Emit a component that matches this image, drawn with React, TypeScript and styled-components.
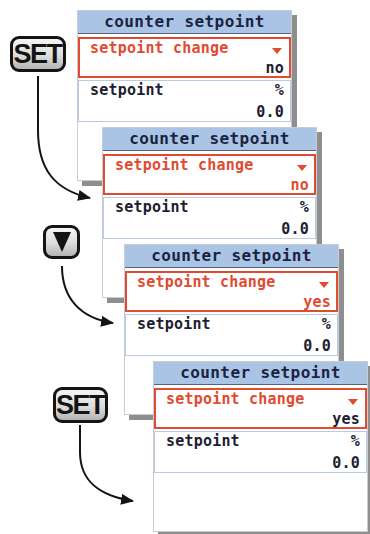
import React, { FC } from 'react';
import styled, { createGlobalStyle } from 'styled-components';

const colors = {
  header: '#a9c4e5',
  headerLine: '#56617a',
  headerText: '#1b2340',
  red: '#e04b31',
  ink: '#1d2030',
  rowBorder: '#b9cbe2',
  frame: '#c9ccd2',
  shadow: '#8e8e8e',
  key: '#141414',
};

const GlobalStyle = createGlobalStyle`
  html, body {
    margin: 0;
    padding: 0;
    background: #fff;
  }
`;

const Stage = styled.div`
  position: relative;
  width: 370px;
  height: 534px;
  overflow: hidden;
  font-family: 'DejaVu Sans Mono', monospace;
  font-weight: bold;
`;

// each screen is a node of the step diagram, they overlap like a stack of cards
const Screen = styled.div<{ $x: number; $y: number }>`
  position: absolute;
  left: ${(p) => p.$x}px;
  top: ${(p) => p.$y}px;
  width: 215px;
  height: 171px;
  box-sizing: border-box;
  background: #fff;
  border: 1px solid ${colors.frame};
  box-shadow: 5px 5px 0 ${colors.shadow};
  display: flex;
  flex-direction: column;
`;

const Header = styled.div`
  height: 22px;
  line-height: 22px;
  background: ${colors.header};
  border-bottom: 1px solid ${colors.headerLine};
  color: ${colors.headerText};
  font-size: 16px;
  letter-spacing: 0.4px;
  text-align: center;
  margin-bottom: 3px;
`;

const Row = styled.div<{ $active?: boolean }>`
  flex: none;
  height: ${(p) => (p.$active ? 41 : 42)}px;
  box-sizing: border-box;
  border: ${(p) => (p.$active ? `2px solid ${colors.red}` : `1px solid ${colors.rowBorder}`)};
  padding: ${(p) => (p.$active ? '1px 5px 0 10px' : '1px 6px 0 11px')};
  margin-bottom: 2px;
  display: flex;
  flex-direction: column;
  gap: ${(p) => (p.$active ? 3 : 5)}px;
  font-size: 15px;
  line-height: 17px;
  letter-spacing: 0.2px;
`;

const Line = styled.div`
  display: flex;
  justify-content: space-between;
  align-items: flex-start;
`;

const Label = styled.span<{ $red?: boolean }>`
  color: ${(p) => (p.$red ? colors.red : colors.ink)};
`;

const Value = styled.span<{ $red?: boolean }>`
  margin-left: auto;
  color: ${(p) => (p.$red ? colors.red : colors.ink)};
`;

const Caret = styled.span`
  width: 0;
  height: 0;
  margin-top: 8px;
  margin-right: 2px;
  border-left: 5px solid transparent;
  border-right: 5px solid transparent;
  border-top: 6px solid ${colors.red};
`;

const Key = styled.div<{ $x: number; $y: number; $w: number; $h: number }>`
  position: absolute;
  left: ${(p) => p.$x}px;
  top: ${(p) => p.$y}px;
  width: ${(p) => p.$w}px;
  height: ${(p) => p.$h}px;
  box-sizing: border-box;
  border: 3px solid ${colors.key};
  border-radius: 9px;
  background: linear-gradient(180deg, #f4f4f4 0%, #dcdcdc 55%, #b4b4b4 100%);
  display: flex;
  align-items: center;
  justify-content: center;
  font-family: 'Liberation Sans', Arial, sans-serif;
  font-weight: bold;
  font-size: 27px;
  letter-spacing: -1.5px;
  color: ${colors.key};
`;

const KeyText = styled.span`
  margin-left: -1px;
  margin-top: 1px;
`;

const DownGlyph = styled.span`
  width: 0;
  height: 0;
  border-left: 9px solid transparent;
  border-right: 9px solid transparent;
  border-top: 20px solid ${colors.key};
`;

const Arrows = styled.svg`
  position: absolute;
  left: 0;
  top: 0;
  pointer-events: none;
`;

type Step = { x: number; y: number; value: string; editing: boolean };

const steps: Step[] = [
  { x: 77, y: 10, value: 'no', editing: false },
  { x: 102, y: 127, value: 'no', editing: true },
  { x: 124, y: 244, value: 'yes', editing: true },
  { x: 153, y: 361, value: 'yes', editing: false },
];

const ScreenCard: FC<{ step: Step }> = ({ step }) => (
  <Screen $x={step.x} $y={step.y}>
    <Header>counter setpoint</Header>
    <Row $active>
      <Line>
        <Label $red>setpoint change</Label>
        <Caret />
      </Line>
      <Line>
        <Value $red={step.editing}>{step.value}</Value>
      </Line>
    </Row>
    <Row>
      <Line>
        <Label>setpoint</Label>
        <Value>%</Value>
      </Line>
      <Line>
        <Value>0.0</Value>
      </Line>
    </Row>
  </Screen>
);

const App: FC = () => (
  <>
    <GlobalStyle />
    <Stage>
      {steps.map((s, i) => (
        <ScreenCard key={i} step={s} />
      ))}

      <Key $x={10} $y={36} $w={56} $h={36}>
        <KeyText>SET</KeyText>
      </Key>
      <Key $x={43} $y={225} $w={37} $h={34}>
        <DownGlyph />
      </Key>
      <Key $x={53} $y={387} $w={55} $h={36}>
        <KeyText>SET</KeyText>
      </Key>

      <Arrows width={370} height={534} viewBox="0 0 370 534">
        <defs>
          <marker id="head" markerUnits="userSpaceOnUse" markerWidth="14" markerHeight="11" refX="12" refY="5.5" orient="auto">
            <path d="M0 0 L13 5.5 L0 11 Z" fill={colors.key} />
          </marker>
        </defs>
        <g fill="none" stroke={colors.key} strokeWidth={2}>
          <path d="M38 76 L38 130 C38 170 55 190 90 198" markerEnd="url(#head)" />
          <path d="M62 266 C62 298 80 318 113 323" markerEnd="url(#head)" />
          <path d="M80 425 L80 452 C80 482 100 496 133 501" markerEnd="url(#head)" />
        </g>
      </Arrows>
    </Stage>
  </>
);

export default App;
